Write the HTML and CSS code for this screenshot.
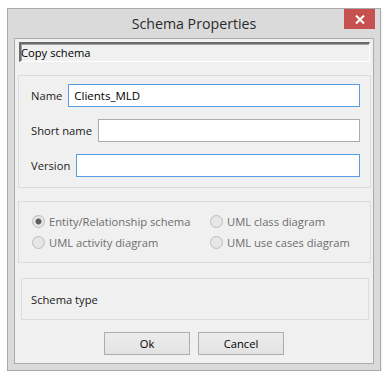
FILE: index.html
```html
<!DOCTYPE html>
<html lang="en">

<head>
    <meta charset="UTF-8">
    <meta name="viewport" content="width=device-width, initial-scale=1.0">
    <title>Schema Properties</title>
    <link rel="stylesheet" href="styles.css">
</head>

<body>
    <div class="window">
        <div class="titlebar">
            <span></span>
            <span class="title">Schema Properties</span>
            <button class="close" type="button" aria-label="Close">
                <svg width="10" height="9" viewBox="0 0 10 9">
                    <path d="M1 0.5 L9 8.5 M9 0.5 L1 8.5" stroke="#fff" stroke-width="2" fill="none" />
                </svg>
            </button>
        </div>
        <div class="client">
            <div class="copy-field">Copy schema</div>

            <div class="group props">
                <div class="form-row">
                    <label for="name">Name</label>
                    <input type="text" id="name" class="focus" value="Clients_MLD">
                </div>
                <div class="form-row">
                    <label for="shortName">Short name</label>
                    <input type="text" id="shortName">
                </div>
                <div class="form-row">
                    <label for="version">Version</label>
                    <input type="text" id="version" class="focus">
                </div>
            </div>

            <div class="group types">
                <label class="radio"><input type="radio" name="kind" checked disabled> Entity/Relationship schema</label>
                <label class="radio"><input type="radio" name="kind" disabled> UML class diagram</label>
                <label class="radio"><input type="radio" name="kind" disabled> UML activity diagram</label>
                <label class="radio"><input type="radio" name="kind" disabled> UML use cases diagram</label>
            </div>

            <div class="group schema-type">Schema type</div>

            <div class="buttons">
                <button type="button" class="btn">Ok</button>
                <button type="button" class="btn">Cancel</button>
            </div>
        </div>
    </div>
</body>

</html>
```

FILE: styles.css
```css
body {
    margin: 0;
    padding: 8px 0 0 7px;
    background-color: #fff;
    font-family: "Open Sans", "Noto Sans", Arial, sans-serif;
    font-size: 11.2px;
    color: #000;
}

.window {
    width: 374px;
    height: 363px;
    box-sizing: border-box;
    border: 1px solid #aaa;
    background: #dadada;
    padding: 0 6px 6px;
    display: flex;
    flex-direction: column;
    box-shadow: 1px 1px 2px rgba(0, 0, 0, 0.08);
}

.titlebar {
    height: 29px;
    display: grid;
    grid-template-columns: 1fr auto 1fr;
    align-items: center;
}

.title {
    font-size: 14.2px;
    color: #2b2b2b;
}

.close {
    justify-self: end;
    align-self: start;
    width: 31px;
    height: 20px;
    margin-right: -1px;
    border: none;
    padding: 0;
    background: #c75050;
    display: flex;
    align-items: center;
    justify-content: center;
}

.client {
    flex: 1;
    border: 1px solid #ababab;
    background: #f0f0f0;
    display: flex;
    flex-direction: column;
}

.copy-field {
    margin: 3px 3px 0 4px;
    height: 20px;
    box-sizing: border-box;
    border-top: 2px solid #6b6b6b;
    border-left: 2px solid #6b6b6b;
    border-right: 1px solid #fff;
    border-bottom: 1px solid #fff;
    box-shadow: inset 1px 1px 0 #a0a0a0;
    padding-top: 1px;
    line-height: 16px;
}

.group {
    border: 1px solid #dcdcdc;
}

.props {
    margin: 13px 2px 0 3px;
    padding: 8px 10px 10px 12px;
    display: flex;
    flex-direction: column;
    gap: 12px;
}

.form-row {
    display: flex;
    align-items: center;
    gap: 6px;
}

.form-row label {
    color: #1a1a1a;
    white-space: nowrap;
}

.form-row input {
    flex: 1;
    min-width: 0;
    height: 23px;
    box-sizing: border-box;
    border: 1px solid #acacac;
    background: #fff;
    padding: 0 5px;
    font: inherit;
    font-size: 11.5px;
    outline: none;
}

.form-row input.focus {
    border-color: #569de5;
}

.types {
    margin: 13px 2px 0 3px;
    padding: 9px 0 9px 13px;
    display: grid;
    grid-template-columns: 178px 1fr;
    grid-auto-rows: 21px;
}

.radio {
    display: flex;
    align-items: center;
    gap: 4px;
    color: #6d6d6d;
    white-space: nowrap;
}

.radio input {
    appearance: none;
    -webkit-appearance: none;
    margin: 0;
    width: 13px;
    height: 13px;
    border: 1px solid #bcbcbc;
    border-radius: 50%;
    background: #e6e6e6;
}

.radio input:checked {
    background: radial-gradient(circle, #5e5e5e 0 2.6px, #e6e6e6 3.4px);
}

.schema-type {
    margin: 15px 4px 0 6px;
    height: 42px;
    box-sizing: border-box;
    padding-left: 9px;
    display: flex;
    align-items: center;
    color: #1a1a1a;
}

.buttons {
    margin-top: 12px;
    display: flex;
    justify-content: center;
    gap: 8px;
}

.btn {
    width: 86px;
    height: 23px;
    border: 1px solid #acacac;
    background: linear-gradient(#ececec, #e3e3e3);
    font: inherit;
    color: #000;
    padding: 0;
}
```
